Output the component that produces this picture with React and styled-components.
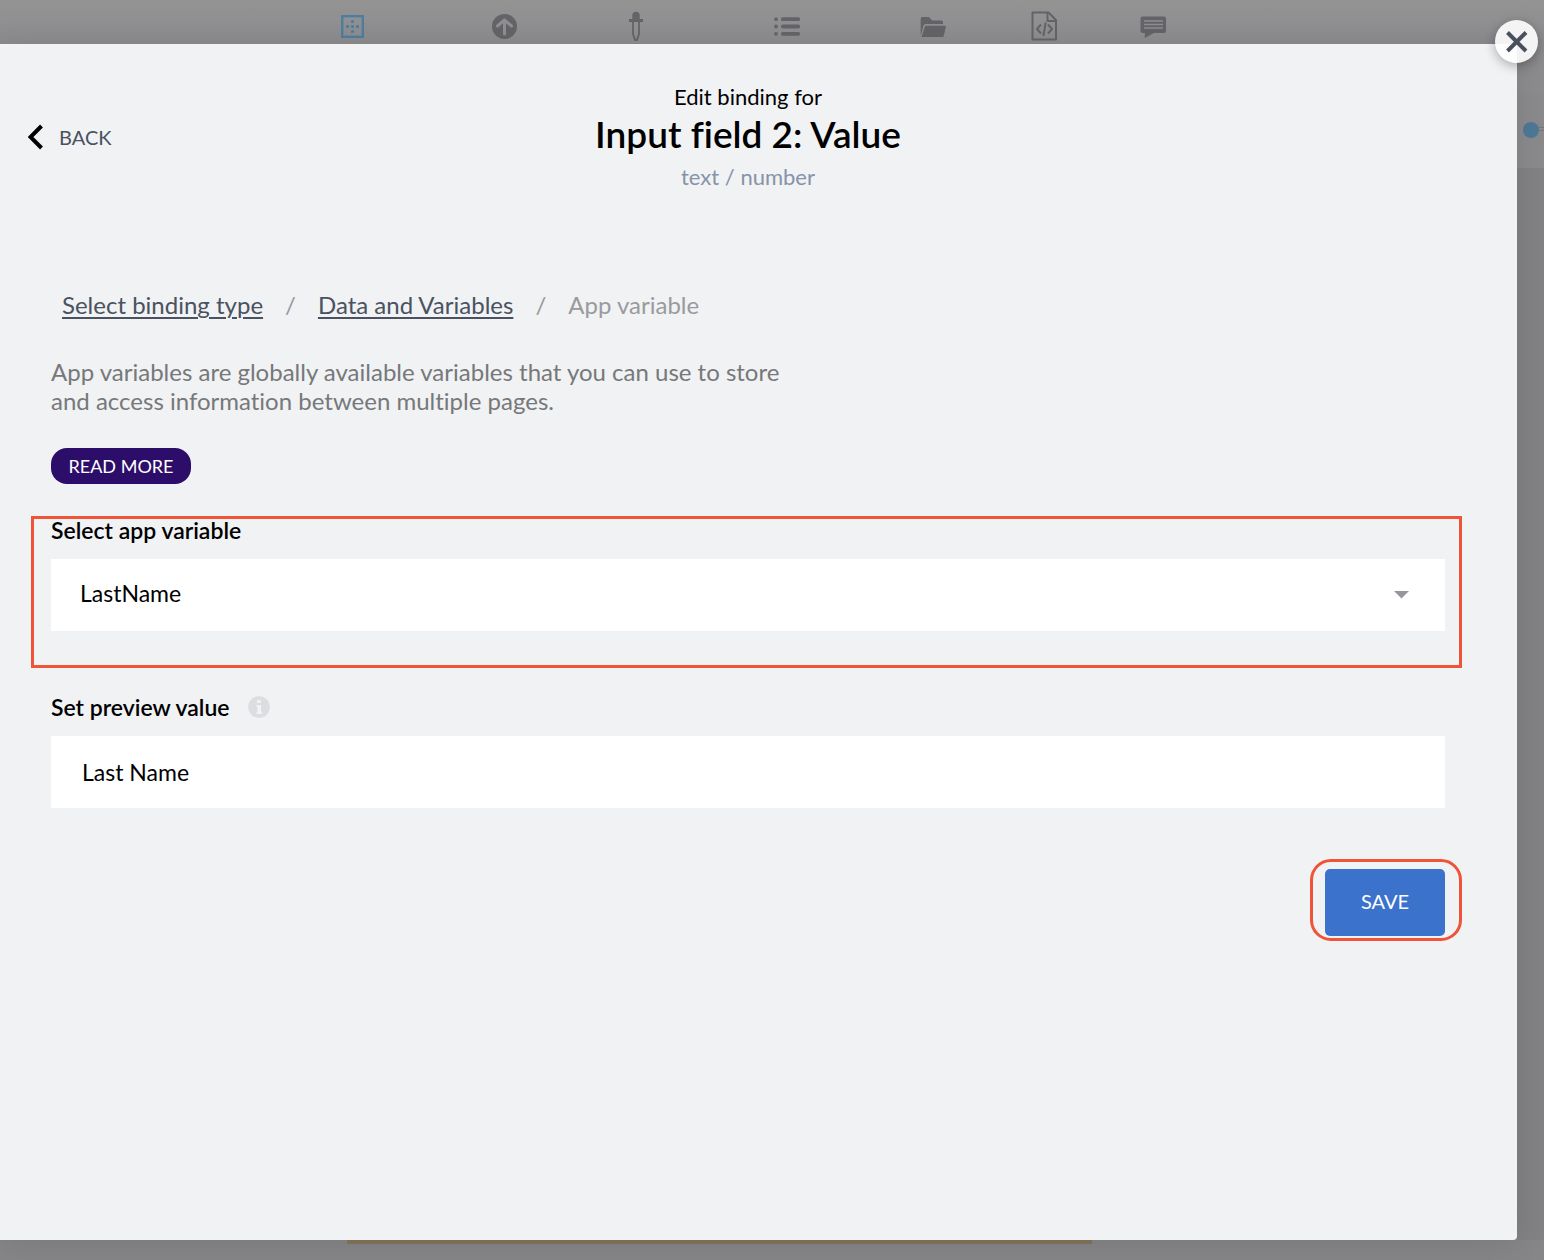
import React from "react";
import styled, { createGlobalStyle } from "styled-components";

const GlobalStyle = createGlobalStyle`
  *, *::before, *::after { box-sizing: border-box; }
  body {
    margin: 0;
    background: #858587;
    color: #000;
    font-family: Lato, "Open Sans", sans-serif;
    font-variant-ligatures: none;
  }
  h1, p { margin: 0; }
  button, input, select { font: inherit; color: inherit; }
`;

const Page = styled.div`
  display: grid;
  grid-template: 44px 1fr 20px / minmax(0, 1fr) 27px;
  min-height: 100vh;
  background: #868688;
`;

const Toolbar = styled.nav`
  grid-column: 1 / -1;
  display: flex;
  align-items: center;
  padding: 8px 0 0 276px;
  background: linear-gradient(#939392, #909092 50%, #8b8b8d);
`;

const Tool = styled.button`
  display: flex;
  justify-content: center;
  align-items: center;
  width: ${(p) => p.$width}px;
  height: 36px;
  padding: 0;
  border: 0;
  background: none;
  color: ${(p) => (p.$active ? "#4f7d9e" : "#646468")};
`;

const Dialog = styled.main`
  position: relative;
  z-index: 1;
  background: #f0f2f4;
  border-bottom-right-radius: 4px;
  box-shadow: 0 4px 32px rgba(0, 0, 0, 0.1);
`;

const CloseButton = styled.button`
  position: absolute;
  top: -24px;
  right: -21px;
  display: flex;
  align-items: center;
  justify-content: center;
  width: 43px;
  height: 43px;
  padding: 0;
  border: 0;
  border-radius: 50%;
  background: rgba(255, 255, 255, 0.9);
  box-shadow: 0 3px 12px rgba(0, 0, 0, 0.3);
`;

const Header = styled.header`
  display: grid;
  grid-template-columns: 1fr auto 1fr;
  padding: 36px 49px 0 28px;
`;

const BackButton = styled.button`
  justify-self: start;
  align-self: center;
  display: flex;
  align-items: center;
  gap: 15px;
  padding: 0 0 6px;
  border: 0;
  background: none;
  color: #4a5160;
  font-size: 20px;
  line-height: 28px;
`;

const Heading = styled.div`
  text-align: center;
`;

const Kicker = styled.p`
  font-size: 22px;
  line-height: 34px;
`;

const Title = styled.h1`
  font-size: 37px;
  font-weight: 600;
  line-height: 40px;
`;

const TypeHint = styled.p`
  color: #8793a8;
  font-size: 22px;
  line-height: 46px;
`;

const Body = styled.form`
  padding: 89px 55px 0 31px;
`;

const Section = styled.section`
  padding: 0 17px 0 20px;
`;

const Breadcrumb = styled.nav`
  display: flex;
  gap: 22px;
  padding-left: 11px;
  color: #9a9a9e;
  font-size: 24px;
  line-height: 32px;
`;

const Crumb = styled.a`
  color: #4a5160;
  text-decoration: underline;
  text-decoration-thickness: 2px;
  text-underline-offset: 3px;
`;

const Description = styled.p`
  max-width: 740px;
  margin: 36px 0 33px;
  color: #77787a;
  font-size: 24px;
  line-height: 29px;
`;

const ReadMore = styled.button`
  display: block;
  width: 140px;
  height: 36px;
  margin-bottom: 32px;
  padding: 0;
  border: 0;
  border-radius: 16px;
  background: #2d0d6a;
  color: #fff;
  font-size: 18px;
`;

const Highlight = styled.div`
  border: 3px solid #f05438;
  padding: 0 14px 34px 17px;
`;

const LabelRow = styled.div`
  display: flex;
  align-items: center;
  gap: 18px;
  margin-bottom: 18px;
`;

const Label = styled.label`
  font-size: 23px;
  font-weight: 600;
  line-height: 22px;
`;

const SelectBox = styled.div`
  position: relative;
`;

const Select = styled.select`
  display: block;
  appearance: none;
  width: 100%;
  height: 72px;
  padding: 0 60px 4px 29px;
  border: 0;
  border-radius: 0;
  background: #fff;
  font-size: 23px;
`;

const Caret = styled.svg`
  position: absolute;
  top: 32px;
  right: 36px;
  pointer-events: none;
`;

const TextInput = styled.input`
  display: block;
  width: 100%;
  height: 72px;
  padding: 0 31px;
  border: 0;
  background: #fff;
  font-size: 23px;
`;

const PreviewField = styled(Section)`
  padding-top: 28px;
`;

const Actions = styled.div`
  display: flex;
  justify-content: flex-end;
  margin-top: 51px;
`;

const SaveHighlight = styled.div`
  padding: 7px 14px 2px 12px;
  border: 3px solid #f05438;
  border-radius: 21px;
`;

const SaveButton = styled.button`
  display: block;
  width: 120px;
  height: 67px;
  padding: 0 0 4px;
  border: 0;
  border-radius: 5px;
  background: #3b72cc;
  color: #fff;
  font-size: 20px;
`;

const SideRail = styled.aside`
  display: flex;
  align-items: flex-start;
  padding: 77px 0 0 6px;
  background: linear-gradient(#8c8c8e 0 51px, #8a8a8c 51px 124px, #828285 124px);
`;

const BottomRail = styled.footer`
  grid-column: 1 / -1;
  padding-left: 347px;
`;

const CanvasEdge = styled.div`
  width: 745px;
  max-width: 100%;
  height: 4px;
  background: #84745c;
`;

const LayoutIcon = () => (
  <svg width="24" height="24" viewBox="0 0 24 24" fill="currentColor">
    <rect x="2.2" y="2.2" width="20.6" height="20.6" fill="none" stroke="currentColor" strokeWidth="2.4" />
    <rect x="11" y="6" width="3" height="3" rx="1" />
    <rect x="11" y="11" width="3" height="3" rx="1" />
    <rect x="11" y="16" width="3" height="3" rx="1" />
    <rect x="6" y="11" width="3" height="3" rx="1" />
    <rect x="16" y="11" width="3" height="3" rx="1" />
  </svg>
);

const UploadIcon = () => (
  <svg width="26" height="26" viewBox="0 0 26 26">
    <circle cx="13.5" cy="13.4" r="12.5" fill="currentColor" />
    <path d="M13.500 21V8M6.500 13l7-6 7 6" fill="none" stroke="#8f8f91" strokeWidth="3" strokeLinecap="round" strokeLinejoin="round" />
  </svg>
);

const DropperIcon = () => (
  <svg width="14" height="30" viewBox="0 0 14 30" fill="currentColor">
    <path d="M3.3 8V4.500a3.700 3.700 0 0 1 7.400 0V8H14v3H0V8z" />
    <path d="M4 10v13l2 6h2l2-6V10" fill="none" stroke="currentColor" strokeWidth="1.8" strokeLinejoin="round" />
  </svg>
);

const ListIcon = () => (
  <svg width="26" height="20" viewBox="0 -1 26 20" fill="currentColor">
    {[2.2, 9.5, 16.8].map((y) => (
      <React.Fragment key={y}>
        <circle cx="2" cy={y} r="1.9" />
        <rect x="7" y={y - 1.9} width="19" height="3.8" rx="1.6" />
      </React.Fragment>
    ))}
  </svg>
);

const FolderIcon = () => (
  <svg width="26" height="24" viewBox="0 -2 26 24" fill="currentColor">
    <path d="M.7 20V2.500Q.7 1 2.200 1H9l3 3.500h9.500Q23 4.500 23 6v2H5.500Q3.800 8 3.300 10z" />
    <path d="M5.200 9.800H24.800Q26.200 9.800 25.900 11l-2.200 9Q23.500 21 22.300 21H1.500z" />
  </svg>
);

const CodeFileIcon = () => (
  <svg width="26" height="30" viewBox="0 0 26 30" fill="none" stroke="currentColor" strokeWidth="2" strokeLinejoin="round">
    <path d="M1.500 1.500h16L25 9v19.500H1.500z" />
    <path d="M16.500 1.500V10H25M10 13.500l-4 4.500 4 4.500M17 13.500l4 4.500-4 4.500M14.700 11.500l-2.400 13.500" />
  </svg>
);

const CommentIcon = () => (
  <svg width="26" height="24" viewBox="0 -2 26 24">
    <path d="M2.500 .5H24Q26 .5 26 2.500V15Q26 17 24 17H14L4.800 22V17H2.500Q.5 17 .5 15V2.500Q.5 .5 2.500 .5z" fill="currentColor" />
    <path d="M4 5H23M4 8.500H23M4 12H23" stroke="#8e8e90" strokeWidth="1.3" />
  </svg>
);

const tools = [
  { name: "Layout", width: 152, Icon: LayoutIcon },
  { name: "Upload", width: 152, Icon: UploadIcon },
  { name: "Style", width: 112, Icon: DropperIcon },
  { name: "Properties", width: 190, Icon: ListIcon },
  { name: "Assets", width: 102, Icon: FolderIcon },
  { name: "Code", width: 120, Icon: CodeFileIcon },
  { name: "Comments", width: 98, Icon: CommentIcon },
];

export default function App() {
  return (
    <>
      <GlobalStyle />
      <Page>
        <Toolbar aria-label="Tools">
          {tools.map(({ name, width, Icon }) => (
            <Tool key={name} type="button" aria-label={name} $width={width} $active={name === "Layout"}>
              <Icon />
            </Tool>
          ))}
        </Toolbar>

        <Dialog>
          <CloseButton type="button" aria-label="Close">
            <svg width="22" height="22" viewBox="0 0 22 22" stroke="#484f5d" strokeWidth="4">
              <path d="M1.500 1.500l18.500 18.500M20 1.500l-18.500 18.500" />
            </svg>
          </CloseButton>

          <Header>
            <BackButton type="button">
              <svg width="16" height="26" viewBox="0 0 16 26" fill="none" stroke="#000" strokeWidth="4">
                <path d="M13.500 2L2.500 13l11 11" />
              </svg>
              BACK
            </BackButton>
            <Heading>
              <Kicker>Edit binding for</Kicker>
              <Title>Input field 2: Value</Title>
              <TypeHint>text / number</TypeHint>
            </Heading>
          </Header>

          <Body onSubmit={(e) => e.preventDefault()}>
            <Section>
              <Breadcrumb aria-label="Breadcrumb">
                <Crumb href="#type">Select binding type</Crumb>
                <span>/</span>
                <Crumb href="#data">Data and Variables</Crumb>
                <span>/</span>
                <span>App variable</span>
              </Breadcrumb>
              <Description>
                App variables are globally available variables that you can use to store and access
                information between multiple pages.
              </Description>
              <ReadMore type="button">READ MORE</ReadMore>
            </Section>

            <Highlight>
              <LabelRow>
                <Label htmlFor="variable">Select app variable</Label>
              </LabelRow>
              <SelectBox>
                <Select id="variable" defaultValue="LastName">
                  <option>LastName</option>
                </Select>
                <Caret width="15" height="8" viewBox="0 0 15 8" fill="#95979c" aria-hidden="true">
                  <path d="M0 0h15L7.500 7.500z" />
                </Caret>
              </SelectBox>
            </Highlight>

            <PreviewField>
              <LabelRow>
                <Label htmlFor="preview">Set preview value</Label>
                <svg width="22" height="22" viewBox="0 0 22 22" aria-hidden="true">
                  <circle cx="11" cy="11" r="10.8" fill="#dcdde0" />
                  <path d="M9 4h4v3H9zM8.500 9H13v7h1v2H8.500v-2H9.500v-5h-1z" fill="#f0f2f4" />
                </svg>
              </LabelRow>
              <TextInput id="preview" type="text" defaultValue="Last Name" />
            </PreviewField>

            <Actions>
              <SaveHighlight>
                <SaveButton type="submit">SAVE</SaveButton>
              </SaveHighlight>
            </Actions>
          </Body>
        </Dialog>

        <SideRail>
          <svg width="21" height="18" viewBox="0 0 21 18" aria-hidden="true">
            <path d="M14 6.500h7M14 9.500h7" stroke="#77777a" />
            <circle cx="8" cy="9" r="8" fill="#4d7896" />
          </svg>
        </SideRail>

        <BottomRail>
          <CanvasEdge />
        </BottomRail>
      </Page>
    </>
  );
}
